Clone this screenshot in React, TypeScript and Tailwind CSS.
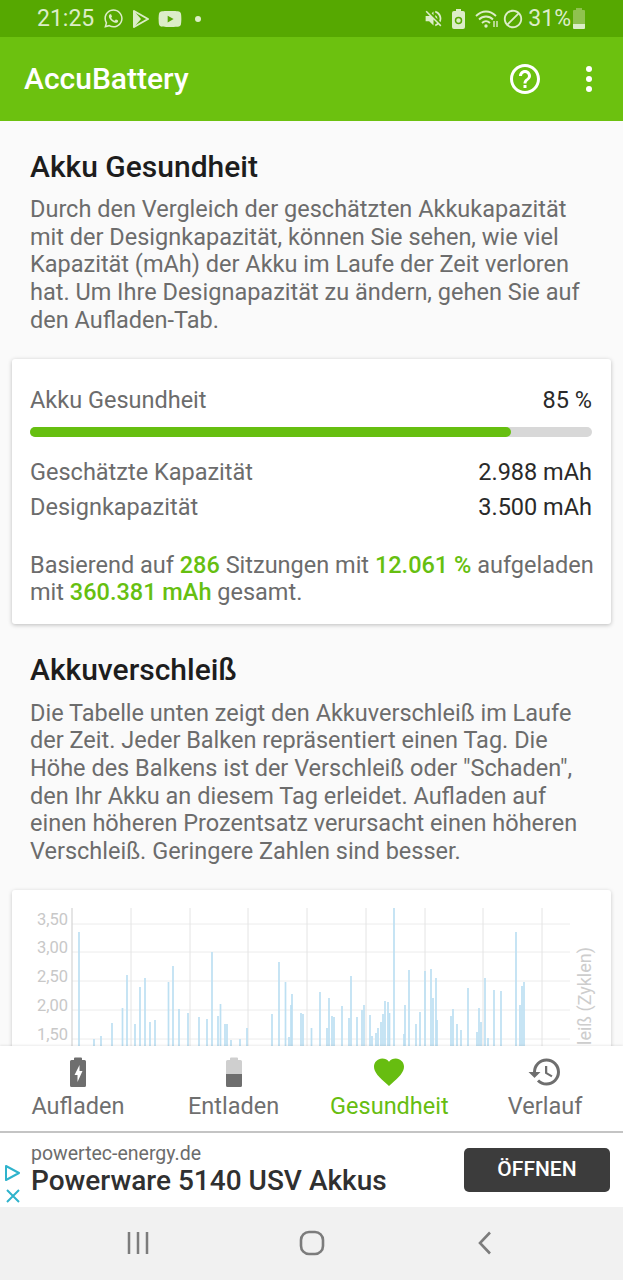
import React from "react";
import { FaWhatsapp, FaYoutube } from "react-icons/fa";
import { MdFavorite, MdHelpOutline, MdHistory, MdVolumeOff, MdBlock } from "react-icons/md";

const bars: [number, number][] = [
  [79, 932], [94, 1039], [101, 1036], [112, 1023], [122.5, 1008], [127, 975], [135, 1024], [140, 987], [145, 978],
  [150, 1022], [155, 1020], [168.5, 982], [173, 966], [179, 1009], [188, 1013], [199, 1017], [207, 1019], [212, 952],
  [218, 1016], [220.5, 1004], [225, 1024], [227, 1024], [231, 1040], [240, 1039], [247, 1028], [272, 1014], [279, 962],
  [285.5, 982], [289, 1037], [291, 1005], [292, 994], [301, 1013], [303, 1014], [311.5, 1028], [320, 992], [327, 1028],
  [329, 998], [332, 1016], [334, 1017], [342, 1006], [351, 976], [349, 1018], [357, 1017], [362, 1010], [364, 1005],
  [370, 1015], [372, 1036], [376, 1033], [378, 1028], [381, 1022], [383, 1014], [385, 1001], [388, 1002], [389.5, 1013],
  [394, 908], [404, 1034], [405, 1005], [409, 970], [416, 1024], [420, 1012], [425, 971], [431, 969], [433, 998],
  [436, 978], [437, 1020], [451, 1016], [453, 1009], [457, 1024], [461, 1030], [468, 988], [477, 1032], [479, 1008],
  [481, 1022], [485, 978], [488, 1038], [494, 990], [501, 991], [516, 932], [520, 1005], [522, 986], [524, 982],
];

function Chart() {
  const ox = 12, oy = 890;
  const hs = [924, 952, 981, 1010, 1039];
  const vs = [131, 190, 248, 307, 366, 425, 483, 542];
  const labels = ["3,50", "3,00", "2,50", "2,00", "1,50"];
  return (
    <svg width="599" height="250" viewBox={`${ox} ${oy} 599 250`} className="block">
      {hs.map((y) => <line key={y} x1={72} x2={570} y1={y} y2={y} stroke="#ececec" strokeWidth="1" />)}
      {vs.map((x) => <line key={x} x1={x} x2={x} y1={908} y2={1060} stroke="#e4e4e4" strokeWidth="1" />)}
      <line x1={72} x2={72} y1={908} y2={1060} stroke="#d4d4d4" strokeWidth="1.2" />
      {bars.map(([x, y], i) => <line key={i} x1={x} x2={x} y1={y} y2={1060} stroke="#bde0f2" strokeWidth="1.7" />)}
      {labels.map((t, i) => (
        <text key={t} x={68} y={hs[i] + 0.5} textAnchor="end" fontSize="16.5" fill="#c8c8c8" fontFamily="Roboto, sans-serif">{t}</text>
      ))}
      <text transform="translate(591 947) rotate(-90)" textAnchor="end" fontSize="18" fill="#cdcdcd" fontFamily="Roboto, sans-serif">Verschleiß (Zyklen)</text>
    </svg>
  );
}

function BatteryIcon({ tone }: { tone: "charge" | "half" }) {
  return (
    <svg width="18" height="32" viewBox="0 0 18 32">
      {tone === "charge" ? (
        <>
          <path d="M5 2.5a1 1 0 0 1 1-1h6a1 1 0 0 1 1 1V4h2.5A1.5 1.5 0 0 1 17 5.5v24a1.5 1.5 0 0 1-1.5 1.5h-13A1.5 1.5 0 0 1 1 29.5v-24A1.5 1.5 0 0 1 2.5 4H5z" fill="#6e6e6e" />
          <path d="M10.5 9 5.5 19h3v7l5-11h-3z" fill="#fff" />
        </>
      ) : (
        <>
          <path d="M5 2.5a1 1 0 0 1 1-1h6a1 1 0 0 1 1 1V4h2.5A1.5 1.5 0 0 1 17 5.5V18H1V5.5A1.5 1.5 0 0 1 2.5 4H5z" fill="#cfcfcf" />
          <path d="M1 18h16v11.5a1.5 1.5 0 0 1-1.5 1.5h-13A1.5 1.5 0 0 1 1 29.5z" fill="#6e6e6e" />
        </>
      )}
    </svg>
  );
}

function Tab({ label, icon, active }: { label: string; icon: React.ReactNode; active?: boolean }) {
  return (
    <div className="flex flex-1 flex-col items-center">
      <div className="flex h-[34px] items-center justify-center">{icon}</div>
      <div className={`mt-[2px] text-[23.5px] leading-[30px] ${active ? "text-[#67bd10]" : "text-[#6f6f6f]"}`}>{label}</div>
    </div>
  );
}

export default function App() {
  const G = "font-medium text-[#66bf10]";
  return (
    <div className="flex h-[1280px] w-[623px] flex-col overflow-hidden bg-[#fafafa] font-['Roboto',sans-serif]">
      <div className="flex h-[37px] shrink-0 items-center justify-between bg-[#56a801] pl-[37px] pr-[37px] text-[#dcedc8]">
        <div className="flex items-center">
          <span className="text-[23px] leading-none">21:25</span>
          <FaWhatsapp className="ml-[9px] h-[21px] w-[21px]" />
          <svg className="ml-[9px]" width="16" height="18" viewBox="0 0 16 18">
            <path d="M1 1l14 8-14 8z" fill="none" stroke="#dcedc8" strokeWidth="2" strokeLinejoin="round" />
            <path d="M2 2l6 7-6 7z" fill="#dcedc8" />
          </svg>
          <FaYoutube className="ml-[9px] h-[24px] w-[24px]" />
          <span className="ml-[13px] h-[6px] w-[6px] rounded-full bg-[#dcedc8]" />
        </div>
        <div className="flex items-center">
          <MdVolumeOff className="h-[21px] w-[21px]" />
          <svg className="ml-[8px]" width="13" height="20" viewBox="0 0 13 20">
            <path d="M4 0h5v2h2a2 2 0 0 1 2 2v14a2 2 0 0 1-2 2H2a2 2 0 0 1-2-2V4a2 2 0 0 1 2-2h2z" fill="#dcedc8" />
            <circle cx="6.5" cy="11.5" r="3" fill="none" stroke="#56a801" strokeWidth="1.5" />
          </svg>
          <svg className="ml-[10px]" width="24" height="20" viewBox="0 0 24 20">
            <path d="M1 7c6-6 14-6 20 0M4 10.500c4-4 10-4 14 0M7 14c2.500-2.500 5.500-2.500 8 0" fill="none" stroke="#dcedc8" strokeWidth="1.8" />
            <circle cx="11" cy="17" r="1.700" fill="#dcedc8" />
            <path d="M19 12v6M22 18v-6" stroke="#dcedc8" strokeWidth="1.400" />
          </svg>
          <MdBlock className="ml-[3px] h-[22px] w-[22px]" />
          <span className="ml-[4px] text-[23px] leading-none">31%</span>
          <svg className="ml-[1px]" width="14" height="22" viewBox="0 0 14 22">
            <path d="M4 0h6v2h2a1 1 0 0 1 1 1v14H1V3a1 1 0 0 1 1-1h2z" fill="#8fc24f" />
            <path d="M1 16h12v4a1 1 0 0 1-1 1H2a1 1 0 0 1-1-1z" fill="#dcedc8" />
          </svg>
        </div>
      </div>

      <div className="flex h-[84px] shrink-0 items-center bg-[#6cc10f] pl-[24px] pr-[31px] text-white">
        <div className="flex-1 text-[30px] font-medium leading-none">AccuBattery</div>
        <MdHelpOutline className="h-[36px] w-[36px]" />
        <div className="ml-[43px] flex flex-col gap-[4px]">
          <span className="h-[6px] w-[6px] rounded-full bg-white" />
          <span className="h-[6px] w-[6px] rounded-full bg-white" />
          <span className="h-[6px] w-[6px] rounded-full bg-white" />
        </div>
      </div>

      <div className="min-h-0 flex-1 overflow-hidden">
        <div className="px-[30px] pt-[28px]">
          <h2 className="text-[30px] font-medium leading-[36px] text-[#1d1d1d]">Akku Gesundheit</h2>
          <p className="mt-[11px] text-[23.5px] leading-[27.7px] text-[#6c6c6c]">
            Durch den Vergleich der geschätzten Akkukapazität mit der Designkapazität, können Sie sehen, wie viel Kapazität (mAh) der Akku im Laufe der Zeit verloren hat. Um Ihre Designapazität zu ändern, gehen Sie auf den Aufladen-Tab.
          </p>
        </div>

        <div className="mx-[12px] mt-[24px] h-[265px] rounded-[3px] bg-white pl-[18px] pr-[19px] pt-[27px] shadow-[0_1px_4px_rgba(0,0,0,0.25)]">
          <div className="flex justify-between text-[23.5px] leading-[28px]">
            <span className="text-[#6c6c6c]">Akku Gesundheit</span>
            <span className="text-[#2a2a2a]">85 %</span>
          </div>
          <div className="mt-[13px] h-[10px] rounded-full bg-[#d8d8d8]">
            <div className="h-full w-[85.6%] rounded-full bg-[#66bf10]" />
          </div>
          <div className="mt-[18px] flex justify-between text-[23.5px] leading-[35px]">
            <span className="text-[#6c6c6c]">Geschätzte Kapazität</span>
            <span className="text-[#2a2a2a]">2.988 mAh</span>
          </div>
          <div className="flex justify-between text-[23.5px] leading-[35px]">
            <span className="text-[#6c6c6c]">Designkapazität</span>
            <span className="text-[#2a2a2a]">3.500 mAh</span>
          </div>
          <p className="-mr-[6px] mt-[27px] text-[23.5px] leading-[27.7px] text-[#6c6c6c]">
            Basierend auf <span className={G}>286</span> Sitzungen mit <span className={G}>12.061 %</span> aufgeladen mit <span className={G}>360.381 mAh</span> gesamt.
          </p>
        </div>

        <div className="px-[30px] pt-[28px]">
          <h2 className="text-[30px] font-medium leading-[36px] text-[#1d1d1d]">Akkuverschleiß</h2>
          <p className="mt-[12px] text-[23.5px] leading-[27.7px] text-[#6c6c6c]">
            Die Tabelle unten zeigt den Akkuverschleiß im Laufe der Zeit. Jeder Balken repräsentiert einen Tag. Die Höhe des Balkens ist der Verschleiß oder "Schaden", den Ihr Akku an diesem Tag erleidet. Aufladen auf einen höheren Prozentsatz verursacht einen höheren Verschleiß. Geringere Zahlen sind besser.
          </p>
        </div>

        <div className="mx-[12px] mt-[24px] rounded-[3px] bg-white shadow-[0_1px_4px_rgba(0,0,0,0.2)]">
          <Chart />
        </div>
      </div>

      <div className="flex h-[85px] shrink-0 bg-white pt-[9px] shadow-[0_-1px_2px_rgba(0,0,0,0.08)]">
        <Tab label="Aufladen" icon={<BatteryIcon tone="charge" />} />
        <Tab label="Entladen" icon={<BatteryIcon tone="half" />} />
        <Tab label="Gesundheit" active icon={<MdFavorite className="h-[36px] w-[36px] text-[#67bd10]" />} />
        <Tab label="Verlauf" icon={<MdHistory className="h-[36px] w-[36px] text-[#6e6e6e]" />} />
      </div>

      <div className="flex h-[76px] shrink-0 items-center border-t-2 border-[#c4c4c4] bg-white">
        <div className="flex w-[31px] shrink-0 flex-col items-center self-end pb-[3px] pr-[5px]">
          <svg width="20" height="20" viewBox="0 0 20 20">
            <path d="M3 3l13 7-13 7z" fill="none" stroke="#2fb3cc" strokeWidth="2" strokeLinejoin="round" />
          </svg>
          <svg className="mt-[5px]" width="16" height="16" viewBox="0 0 16 16">
            <path d="M2 2l12 12M14 2L2 14" stroke="#2fb3cc" strokeWidth="2" />
          </svg>
        </div>
        <div className="flex-1">
          <div className="text-[19.5px] leading-[22px] text-[#6c6c6c]">powertec-energy.de</div>
          <div className="text-[28px] font-medium leading-[32px] text-[#303030]">Powerware 5140 USV Akkus</div>
        </div>
        <div className="mr-[13px] flex h-[44px] w-[146px] items-center justify-center rounded-[5px] bg-[#3c3c3c] text-[21px] font-medium text-white">ÖFFNEN</div>
      </div>

      <div className="flex h-[73px] shrink-0 items-center bg-[#f1f1f1] pb-[1px]">
        <div className="flex flex-1 items-center justify-center">
          <svg width="24" height="24" viewBox="0 0 24 24"><path d="M3 1v22M12 1v22M21 1v22" stroke="#7c7c7c" strokeWidth="2.5" /></svg>
        </div>
        <div className="flex w-[70px] justify-center">
          <svg width="26" height="26" viewBox="0 0 26 26"><rect x="2" y="2" width="22" height="22" rx="8" fill="none" stroke="#7c7c7c" strokeWidth="2.6" /></svg>
        </div>
        <div className="flex flex-1 items-center justify-center">
          <svg width="16" height="24" viewBox="0 0 16 24"><path d="M13 1.5 3 12l10 10.5" fill="none" stroke="#7c7c7c" strokeWidth="2.6" /></svg>
        </div>
      </div>
    </div>
  );
}
